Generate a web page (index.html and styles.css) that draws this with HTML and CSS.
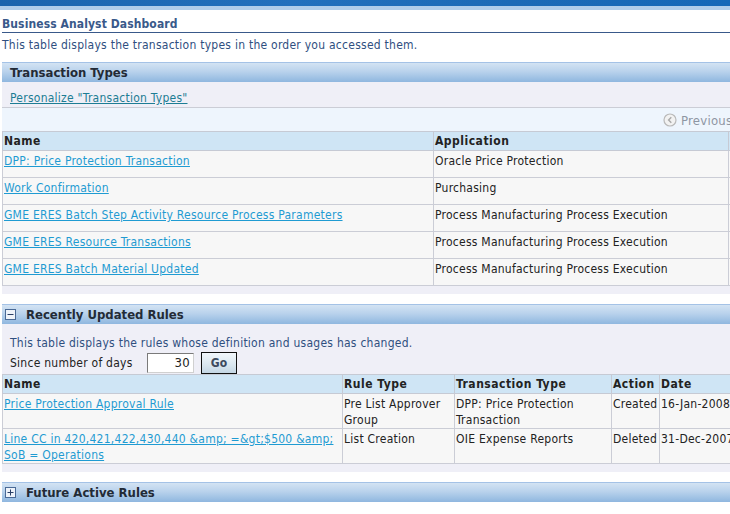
FILE: index.html
```html
<!DOCTYPE html>
<html>
<head>
<meta charset="utf-8">
<link rel="stylesheet" href="styles.css">
</head>
<body>
<div class="topbar"><div class="topbar-dark"></div><div class="topbar-light"></div></div>
<div class="page">
  <h1 class="title">Business Analyst Dashboard</h1>
  <p class="intro">This table displays the transaction types in the order you accessed them.</p>

  <section class="section">
    <div class="bar"><span class="bar-title">Transaction Types</span></div>
    <div class="panel">
      <div class="personalize"><a href="#" class="link-teal">Personalize "Transaction Types"</a></div>
      <div class="nav">
        <span class="nav-prev">
          <svg class="prev-icon" width="14" height="14" viewBox="0 0 14 14"><circle cx="7" cy="7" r="6" fill="#f2f2f2" stroke="#b9b9b9" stroke-width="1.2"/><path d="M8.3 4.2 L5.6 7 L8.3 9.8" fill="none" stroke="#a9a9a9" stroke-width="1.4"/></svg>
          Previous
        </span>
      </div>
      <table class="grid tt">
        <colgroup><col class="c-name"><col class="c-app"><col class="c-extra"></colgroup>
        <thead><tr><th>Name</th><th>Application</th><th></th></tr></thead>
        <tbody>
          <tr><td><a href="#" class="link">DPP: Price Protection Transaction</a></td><td>Oracle Price Protection</td><td></td></tr>
          <tr><td><a href="#" class="link">Work Confirmation</a></td><td>Purchasing</td><td></td></tr>
          <tr><td><a href="#" class="link">GME ERES Batch Step Activity Resource Process Parameters</a></td><td>Process Manufacturing Process Execution</td><td></td></tr>
          <tr><td><a href="#" class="link">GME ERES Resource Transactions</a></td><td>Process Manufacturing Process Execution</td><td></td></tr>
          <tr><td><a href="#" class="link">GME ERES Batch Material Updated</a></td><td>Process Manufacturing Process Execution</td><td></td></tr>
        </tbody>
      </table>
      <div class="panel-foot"></div>
    </div>
  </section>

  <section class="section">
    <div class="bar">
      <span class="toggle"><svg width="11" height="11" viewBox="0 0 11 11"><rect x="0.5" y="0.5" width="10" height="10" fill="#eef3fa" stroke="#4a6a96"/><path d="M2.5 5.5 H8.5" stroke="#2a3f66" stroke-width="1"/></svg></span>
      <span class="bar-title">Recently Updated Rules</span>
    </div>
    <div class="panel">
      <p class="panel-text">This table displays the rules whose definition and usages has changed.</p>
      <div class="filter">
        <label class="filter-label">Since number of days</label>
        <span class="input">30</span>
        <button class="go">Go</button>
      </div>
      <table class="grid rules">
        <colgroup><col class="r-name"><col class="r-type"><col class="r-tt"><col class="r-action"><col class="r-date"></colgroup>
        <thead><tr><th>Name</th><th>Rule Type</th><th>Transaction Type</th><th>Action</th><th>Date</th></tr></thead>
        <tbody>
          <tr><td><a href="#" class="link">Price Protection Approval Rule</a></td><td>Pre List Approver Group</td><td>DPP: Price Protection Transaction</td><td>Created</td><td>16-Jan-2008</td></tr>
          <tr><td><a href="#" class="link">Line CC in 420,421,422,430,440 &amp;amp; =&amp;gt;$500 &amp;amp; SoB = Operations</a></td><td>List Creation</td><td>OIE Expense Reports</td><td>Deleted</td><td>31-Dec-2007</td></tr>
        </tbody>
      </table>
      <div class="panel-foot"></div>
    </div>
  </section>

  <section class="section">
    <div class="bar">
      <span class="toggle"><svg width="11" height="11" viewBox="0 0 11 11"><rect x="0.5" y="0.5" width="10" height="10" fill="#eef3fa" stroke="#4a6a96"/><path d="M2.5 5.5 H8.5 M5.5 2.5 V8.5" stroke="#2a3f66" stroke-width="1"/></svg></span>
      <span class="bar-title">Future Active Rules</span>
    </div>
  </section>
</div>
</body>
</html>
```

FILE: styles.css
```css
html, body {
  margin: 0;
  padding: 0;
  background: #ffffff;
  overflow: hidden;
}
body {
  font-family: "DejaVu Sans Condensed", "DejaVu Sans", sans-serif;
  font-size: 12px;
  letter-spacing: 0.25px;
  color: #222;
  width: 730px;
}
.topbar { height: 10px; }
.topbar-dark {
  height: 6px;
  background: linear-gradient(90deg, #1b64ad 0%, #2270bd 40%, #1c6ab6 70%, #1568b8 100%);
}
.topbar-light {
  height: 4px;
  background: #b0cdea;
}
.page {
  padding-left: 2px;
  width: 800px;
}
.title {
  margin: 7px 0 0 0;
  font-size: 12px;
  letter-spacing: 0.1px;
  font-weight: bold;
  color: #39598a;
  line-height: 14px;
  padding-bottom: 1px;
  border-bottom: 1px solid #39598a;
  width: 728px;
}
.intro {
  margin: 4px 0 0 0;
  line-height: 16px;
  color: #2f4f7f;
}
.section { margin-top: 9px; }
.section + .section { margin-top: 10px; }
.bar {
  height: 19px;
  border-top: 1px solid #a4c2e6;
  background: linear-gradient(180deg, #d3e3f3 0%, #b9d2ec 45%, #8fb7df 100%);
  display: flex;
  align-items: center;
}
.bar-title {
  font-weight: bold;
  font-size: 13px;
  letter-spacing: 0;
  color: #232b36;
  padding-left: 8px;
}
.toggle {
  display: flex;
  padding-left: 3px;
  margin-right: 4px;
}
.toggle + .bar-title { padding-left: 6px; }
.panel { background: #efeff7; }
.personalize {
  height: 25px;
  padding-left: 8px;
  display: flex;
  align-items: flex-end;
  box-sizing: border-box;
  padding-bottom: 2px;
}
.link-teal { color: #1d7d94; text-decoration: underline; }
.link { color: #1f9bd2; text-decoration: underline; }
.nav {
  height: 24px;
  border-top: 1px solid #cbcdd6;
  background: #eef5fd;
  display: flex;
  align-items: center;
  padding-left: 661px;
  padding-top: 1px;
  box-sizing: border-box;
}
.nav-prev {
  display: flex;
  align-items: center;
  gap: 4px;
  color: #8e96a3;
  font-size: 13px;
}
.grid {
  border-collapse: collapse;
  table-layout: fixed;
  background: #f7f7f7;
}
.grid th {
  background: #cfe5f5;
  text-align: left;
  font-weight: bold;
  color: #222;
  font-size: 12px;
  letter-spacing: 0.5px;
  padding: 1px 1px 0 1px;
  border: 1px solid #c6cad4;
  height: 17px;
  line-height: 17px;
  vertical-align: middle;
}
.grid td {
  border: 1px solid #cbcdd6;
  padding: 2px 1px 0 1px;
  vertical-align: top;
  line-height: 16px;
  color: #222;
}
.tt td { height: 24px; }
.c-name { width: 431px; }
.c-app { width: 295px; }
.c-extra { width: 60px; }
.panel-foot { height: 8px; }
.panel-text {
  margin: 0;
  padding: 11px 0 0 8px;
  line-height: 16px;
  color: #2f4f7f;
}
.filter {
  display: flex;
  align-items: center;
  padding-left: 8px;
  height: 23px;
}
.filter-label { color: #222; width: 137px; }
.input {
  width: 42px;
  height: 18px;
  background: #fff;
  border: 1px solid #7a7a7a;
  border-right-color: #d0d0d0;
  border-bottom-color: #d0d0d0;
  text-align: right;
  padding-right: 3px;
  line-height: 18px;
  font-size: 13px;
  color: #222;
}
.go {
  margin-left: 7px;
  width: 36px;
  height: 22px;
  border: 1px solid #111;
  background: linear-gradient(180deg, #f2f7fb 0%, #d9e6ef 60%, #c4d6e4 100%);
  font-family: inherit;
  font-weight: bold;
  font-size: 12px;
  color: #3d4a5e;
  padding: 0;
}
.rules td { height: 32px; }
.r-name { width: 340px; }
.r-type { width: 112px; }
.r-tt { width: 157px; }
.r-action { width: 48px; }
.r-date { width: 90px; }
```
